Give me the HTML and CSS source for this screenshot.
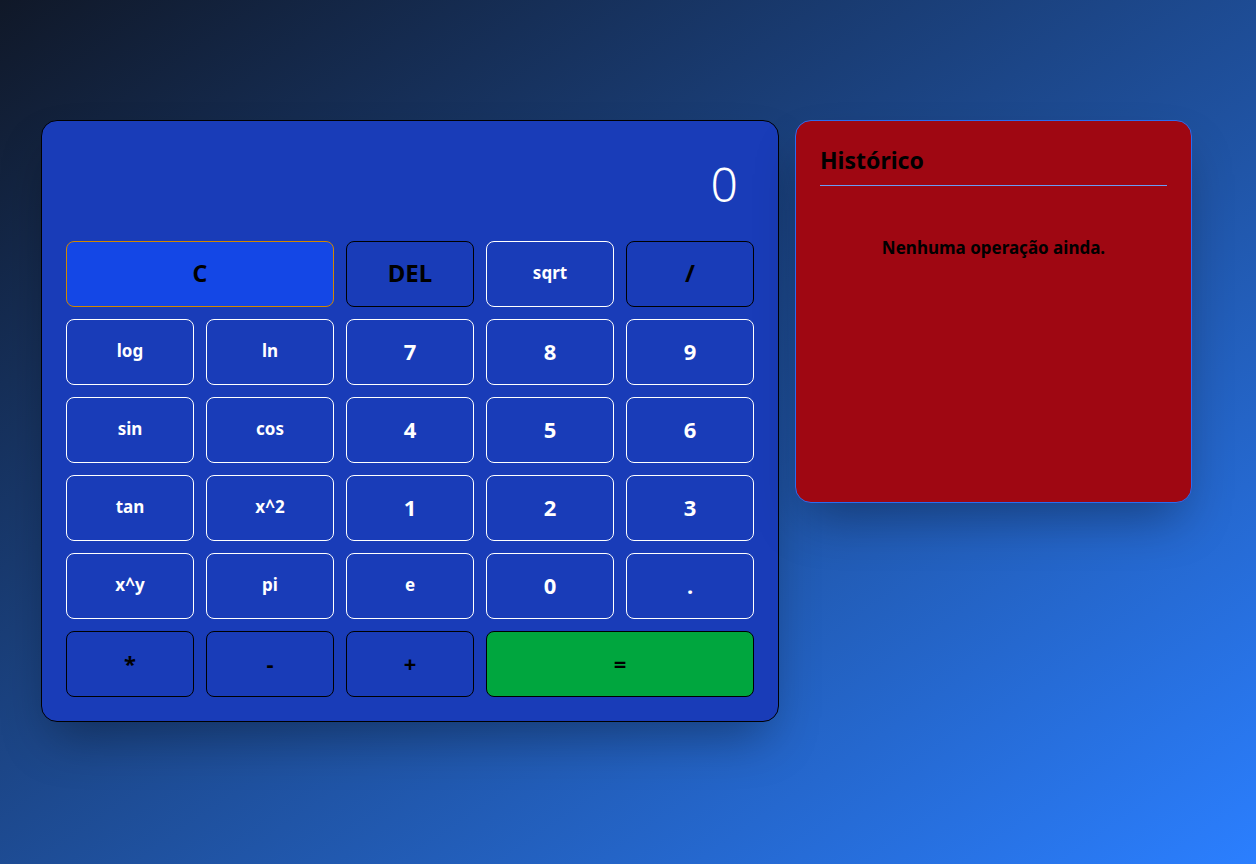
FILE: index.html
```html
<!DOCTYPE html>
<html lang="pt">
<head>
<meta charset="utf-8">
<title>Calculadora</title>
<link rel="stylesheet" href="styles.css">
</head>
<body>
<main class="page">
  <section class="calc">
    <div class="display">0</div>
    <div class="keys">
      <button class="key key-clear wide">C</button>
      <button class="key key-op big">DEL</button>
      <button class="key key-fn">sqrt</button>
      <button class="key key-op big">/</button>

      <button class="key key-fn">log</button>
      <button class="key key-fn">ln</button>
      <button class="key key-num">7</button>
      <button class="key key-num">8</button>
      <button class="key key-num">9</button>

      <button class="key key-fn">sin</button>
      <button class="key key-fn">cos</button>
      <button class="key key-num">4</button>
      <button class="key key-num">5</button>
      <button class="key key-num">6</button>

      <button class="key key-fn">tan</button>
      <button class="key key-fn">x^2</button>
      <button class="key key-num">1</button>
      <button class="key key-num">2</button>
      <button class="key key-num">3</button>

      <button class="key key-fn">x^y</button>
      <button class="key key-fn">pi</button>
      <button class="key key-fn">e</button>
      <button class="key key-num">0</button>
      <button class="key key-num">.</button>

      <button class="key key-op">*</button>
      <button class="key key-op">-</button>
      <button class="key key-op">+</button>
      <button class="key key-eq wide">=</button>
    </div>
  </section>
  <aside class="history">
    <h2 class="history-title">Histórico</h2>
    <p class="history-empty">Nenhuma operação ainda.</p>
  </aside>
</main>
</body>
</html>
```

FILE: styles.css
```css
* { box-sizing: border-box; }
html, body { margin: 0; height: 100%; }
body {
  font-family: "Noto Sans", "Open Sans", sans-serif;
  background: linear-gradient(to bottom right, #101828, #2b7fff);
  overflow: hidden;
}
.page {
  display: flex;
  align-items: flex-start;
  gap: 16px;
  padding: 120px 0 0 41px;
}
.calc {
  width: 738px;
  background: #193cb8;
  border: 1px solid #000;
  border-radius: 16px;
  padding: 24px;
  box-shadow: 0 25px 50px -12px rgba(0, 0, 0, 0.35);
}
.display {
  height: 80px;
  padding: 16px;
  margin-bottom: 16px;
  text-align: right;
  color: #fff;
  font-size: 48px;
  line-height: 46px;
  font-weight: 300;
}
.keys {
  display: grid;
  grid-template-columns: repeat(5, 128px);
  grid-auto-rows: 66px;
  gap: 12px;
}
.key {
  font-family: inherit;
  background: transparent;
  border-radius: 8px;
  font-weight: 700;
  padding: 0 0 3px;
  cursor: pointer;
}
.wide { grid-column: span 2; }
.key-fn {
  border: 1px solid #fff;
  color: #fff;
  font-size: 17px;
}
.key-num {
  border: 1px solid #fff;
  color: #fff;
  font-size: 22px;
}
.key-op {
  border: 1px solid #000;
  color: #000;
  font-size: 22px;
}
.key-op.big { font-size: 24px; }
.key-clear {
  background: #1447e6;
  border: 1px solid #d08700;
  color: #000;
  font-size: 23px;
}
.key-eq {
  background: #00a63e;
  border: 1px solid #000;
  color: #000;
  font-size: 22px;
}
.history {
  width: 397px;
  height: 383px;
  background: #9f0712;
  border: 1px solid #2b6cf0;
  border-radius: 16px;
  padding: 24px;
  box-shadow: 0 25px 50px -12px rgba(0, 0, 0, 0.35);
}
.history-title {
  margin: 0;
  font-size: 23px;
  line-height: 30px;
  font-weight: 700;
  color: #000;
  padding-bottom: 10px;
  border-bottom: 1px solid #6a9cf5;
}
.history-empty {
  margin: 50px 0 0;
  text-align: center;
  font-size: 17px;
  line-height: 24px;
  font-weight: 700;
  color: #000;
}
```
